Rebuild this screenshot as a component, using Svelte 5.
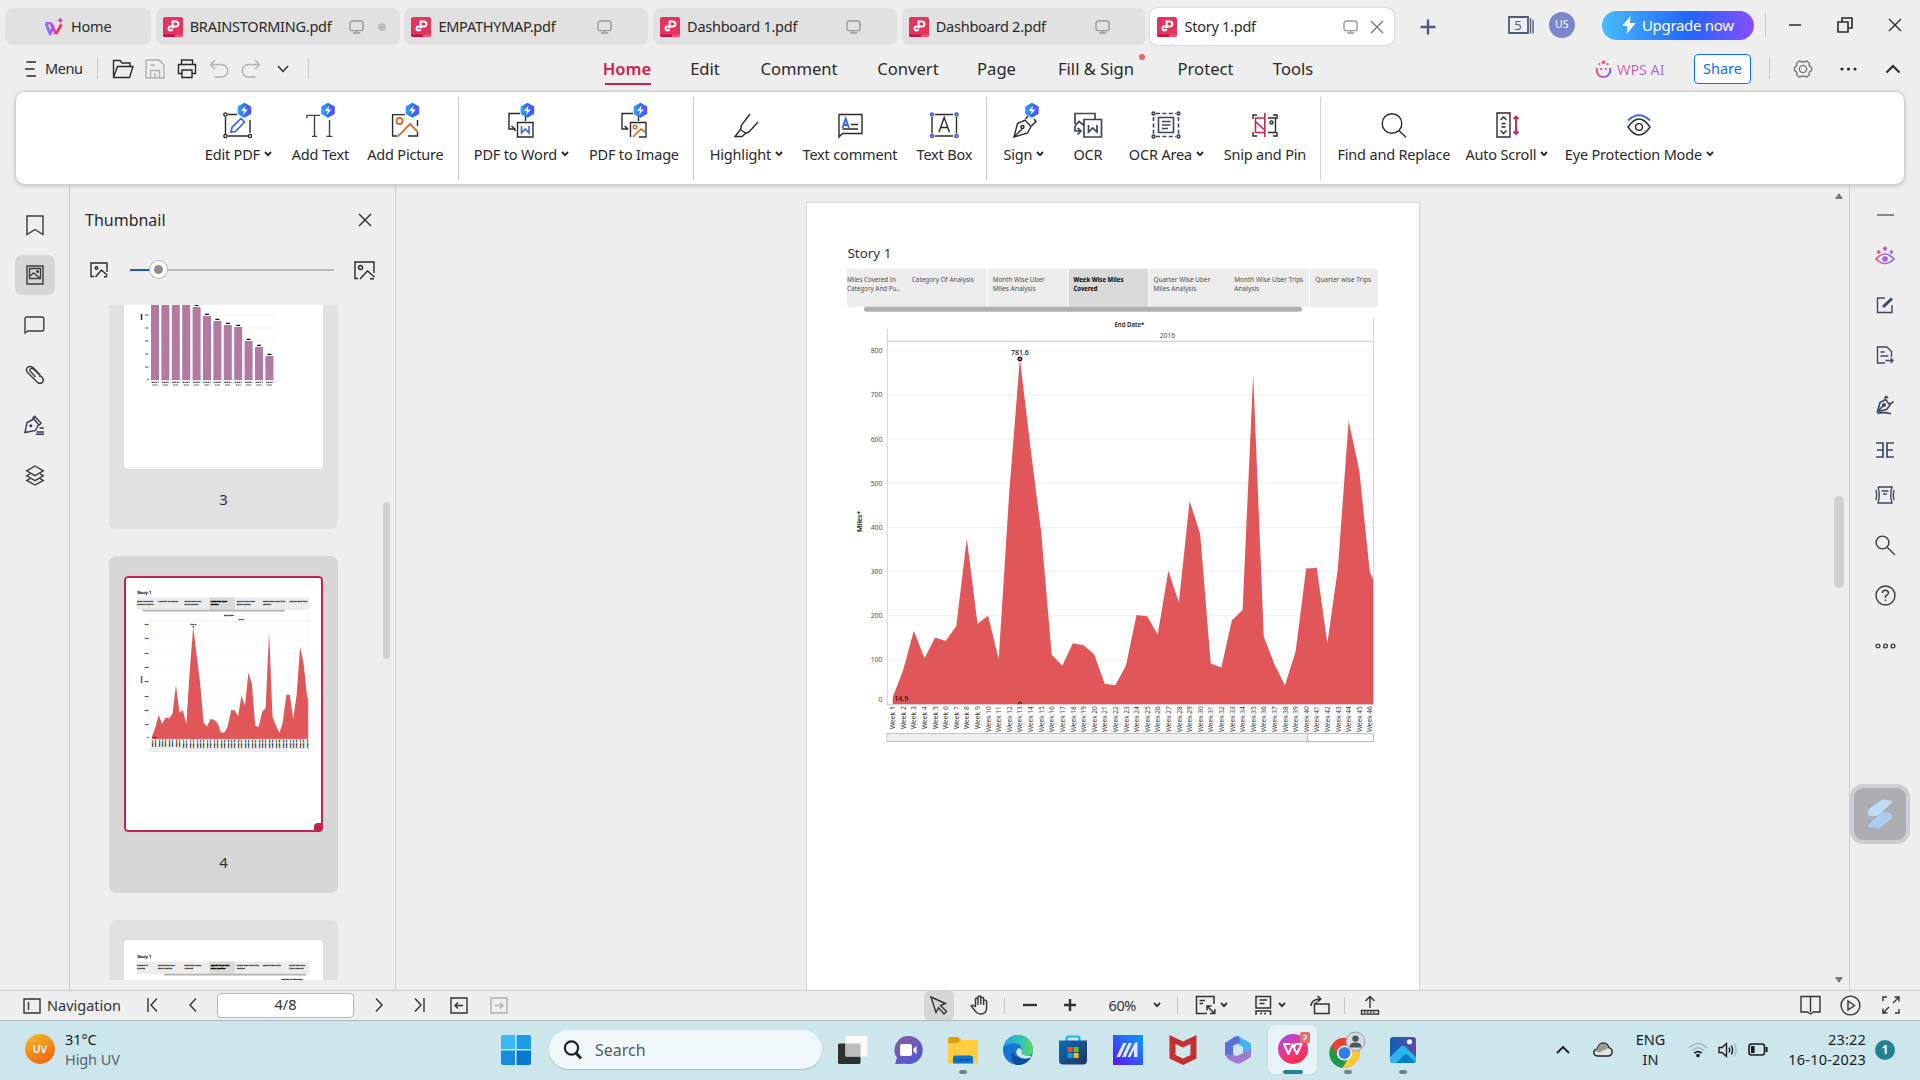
<script>
  // Icons: [width, height, svg markup]
  const bolt = '<g transform="translate(13.4 -9.8)"><path d="M8 0.5 L14.8 4.2 V11.8 L8 15.5 L1.2 11.8 V4.2Z" fill="url(#hexGrad)" stroke="none"/><path d="M9.2 3.2 L4.6 8.8 H7.6 L6.8 12.8 L11.4 7.2 H8.4Z" fill="#fff" stroke="none"/></g>';
  const icons = {
    wps: [20, 20, '<g fill="none" stroke-width="2.8" stroke-linejoin="round"><path d="M2 6.4 L6.2 17 L9.6 8.5" stroke="#8b6cf6"/><path d="M1.4 6.2H7.5" stroke="#a06bf8" stroke-width="2.4"/><path d="M7 6.4 L12 17" stroke="#d83fd0"/><path d="M12 17 L17.4 7.4" stroke="#fb2f55"/></g><path d="M16.3 0 L17.2 2.6 L19.6 3.4 L17.2 4.2 L16.3 6.8 L15.4 4.2 L13 3.4 L15.4 2.6Z" fill="#b0489c" stroke="none"/>'],
    pdf: [20, 20, '<g stroke="none"><rect width="20" height="20" rx="2" fill="#e2345f"/><path d="M0 17.4H12V20H2Q0 20 0 18Z" fill="#c70f49"/><path d="M12 17.4H20V18Q20 20 18 20H12Z" fill="#ff4f6f"/></g><path d="M9.6 11 V4.4 H12.8 A2.6 2.6 0 0 1 12.8 9.6 H7.2 A1.9 1.9 0 1 0 9.4 11.6" fill="none" stroke="#fff" stroke-width="2"/>'],
    monitor: [16, 14, '<rect x="1" y="1" width="13" height="9.6" rx="2.2"/><path d="M7.5 11V12.8M4 13H11.2"/>'],
    close: [14, 14, '<path d="M1 1L13 13M13 1L1 13"/>'],
    plus: [16, 16, '<path d="M8 0.5V15.5M0.5 8H15.5" stroke-width="2.4"/>'],
    min: [12, 12, '<path d="M0 6H12" stroke-width="1.5"/>'],
    restore: [16, 16, '<path d="M1 5H11V15H1ZM5 5V1H15V11H11" stroke-width="1.6"/>'],
    burger: [12, 16, '<path d="M1.5 1H11M0 8H9.5M1.5 15H11"/>'],
    folder: [22, 20, '<path d="M1.5 17V1.5H8L10 4H18V7.5M1.5 18.5L5.5 7.5H21L17.5 18.5Z"/>'],
    save: [20, 20, '<path d="M1 1H14L19 6V19H1ZM5.5 19V11.5H14.5V19M5.5 6H10M10 14V19"/>'],
    printer: [20, 20, '<path d="M4.5 5V1H15.5V5M4.5 14.5H1.5V5.5H18.5V14.5H15.5M5 11H15V18.5H5Z"/>'],
    undo: [20, 20, '<path d="M6 1L1.5 5.5L6 10M1.5 5.5H12.5A6.2 6.2 0 0 1 12.5 18H5.5"/>'],
    redo: [20, 20, '<path d="M14 1L18.5 5.5L14 10M18.5 5.5H7.5A6.2 6.2 0 0 0 7.5 18H14.5"/>'],
    chev: [12, 8, '<path d="M1 1L6 6.5L11 1"/>'],
    chevSm: [8, 6, '<path d="M1 1L4 4.2L7 1" stroke-width="1.9"/>'],
    chevUp: [16, 10, '<path d="M1.5 8.5L8 2L14.5 8.5" stroke-width="2"/>'],
    gear: [20, 20, '<path d="M6.4 1.8L8.2 2.8H11.8L13.6 1.8L16.4 4.2L16.2 6.6L18.6 8.8V11.2L16.2 13.4L16.4 15.8L13.6 18.2L11.8 17.2H8.2L6.4 18.2L3.6 15.8L3.8 13.4L1.4 11.2V8.8L3.8 6.6L3.6 4.2Z"/><circle cx="10" cy="10" r="3.6"/>'],
    dots: [17, 4, '<g fill="currentColor" stroke="none"><circle cx="2" cy="2" r="1.6"/><circle cx="8.5" cy="2" r="1.6"/><circle cx="15" cy="2" r="1.6"/></g>'],
    ai: [17, 18, '<g stroke="url(#aiGrad)" stroke-width="2"><path d="M2 8A6.8 7 0 1 0 15 8"/></g><path d="M6.2 8V10M10.8 8V10" stroke="#b45fe0" stroke-width="1.8"/><g fill="#e05080" stroke="none"><circle cx="8.5" cy="2.2" r="1.8"/><circle cx="4.4" cy="4.2" r="1.1"/><circle cx="12.6" cy="4.2" r="1.1"/></g>'],
    count: [26, 18, '<path d="M1 1H20V17H1Z" stroke-width="1.8"/><path d="M22.5 2V17.5M25 4V17.5" stroke-width="1.4"/>'],
    editPdf: [30, 26, '<path d="M5 2.5H14M2.5 5V22M5 24H25M27 8V21"/><g><circle cx="2.5" cy="2.5" r="1.6"/><circle cx="2.5" cy="24" r="1.6"/><circle cx="27" cy="24" r="1.6"/></g><path d="M8 20L9 15.5L18 6.5L21.5 10L12.5 19.5Z" stroke="#3c63e6" stroke-width="1.7"/>' + bolt],
    addText: [30, 26, '<path d="M2 6V3.4H15M9.5 3.4V24.4M7 24.4H12M24.5 8V24.4M21.5 24.4H27.5" stroke="#3a4258"/><g transform="translate(1.6 0)">' + bolt + '</g>'],
    addPic: [30, 26, '<path d="M15 2.6H2.6V24H7M27.5 8V14M27.5 20V24H18"/><circle cx="9.5" cy="9" r="3" stroke="#d5692f" stroke-width="1.8"/><path d="M8 24.4L20 12L28 20" stroke="#d5692f" stroke-width="1.8"/><g transform="translate(1 0)">' + bolt + '</g>'],
    toWord: [30, 26, '<path d="M14 1.5H3V17H9M5.5 14L9 17V19M19.5 4V9M11.5 10.5H27V25H11.5Z"/><path d="M15.5 14V21L19.3 17L23 21V14" stroke="#3c63e6" stroke-width="1.6"/>' + bolt],
    toImg: [30, 26, '<path d="M14 1.5H3V17H9M5.5 14L9 17M19.5 4V9M11.5 25V10.5H27V25H20"/><circle cx="16" cy="15" r="1.8" stroke="#d5692f"/><path d="M14 25L22 17L27 20.5" stroke="#d5692f" stroke-width="1.7"/>' + bolt],
    highlight: [28, 26, '<path d="M18 2L9.5 13L8.5 17.5L14 21.5L17 20L26 10M8.5 17.5L3 24.5H10L13.5 21.5"/>'],
    comment: [28, 26, '<path d="M3 25V2.5H26V21.5H6.5Z"/><path d="M6.5 16L9.7 6.5L12.9 16M7.6 13H11.8" stroke="#3c63e6" stroke-width="1.8"/><path d="M15 12.5H22M6.5 17H22"/>'],
    textBox: [30, 26, '<path d="M6 2.5H24M6 24H24M3 5V21.5M27.5 5V21.5M10 20L15.2 5.5L20.4 20M11.8 15.5H18.8"/><g stroke="#3c63e6" stroke-width="1.8"><circle cx="3" cy="2.5" r="1.4"/><circle cx="27.5" cy="2.5" r="1.4"/><circle cx="3" cy="24" r="1.4"/><circle cx="27.5" cy="24" r="1.4"/></g>'],
    sign: [28, 26, '<path d="M4 25L7.5 11.5L15 8L21 14.5L17.5 21Z"/><path d="M4 25L12 17M15.5 7L18 4M21.5 14L26 9.5L24 7"/><circle cx="12.5" cy="15" r="1.5"/><g transform="translate(.5 0)">' + bolt + '</g>'],
    ocr: [30, 26, '<g stroke="#3c465c" stroke-width="1.7"><path d="M2 12V1.5H22V7M11 7.5H28.5V25H11ZM2 14L6 9.5L10.5 13M2 14V19H7M4.5 16L8 19L4.5 22.5"/><path d="M15.5 13V20L19.8 16L24 20V13"/></g>'],
    ocrArea: [30, 28, '<g stroke="#3c465c" stroke-width="1.6"><path d="M5 2.5H25M5 25.5H25M2.5 6V23M27.5 6V23" stroke-dasharray="4 2.4"/><path d="M7.5 6.5H22.5V21.5H7.5ZM11 10.5H19.5M11 14H19.5M11 17.5H17"/><circle cx="2.5" cy="2.5" r="1.4"/><circle cx="27.5" cy="2.5" r="1.4"/><circle cx="2.5" cy="25.5" r="1.4"/><circle cx="27.5" cy="25.5" r="1.4"/></g>'],
    snip: [28, 26, '<path d="M2 7V3H6M2 20V24H6M22 3H26V7M22 24H26V20M17 6H24.5V20.5H17"/><circle cx="20.5" cy="10.5" r="1.5"/><path d="M13.8 1V25M13 6H4.5V20.5H13M5 10L13 17.5" stroke="#c9254e" stroke-width="1.6"/>'],
    find: [28, 26, '<circle cx="12" cy="11.5" r="9.8"/><path d="M19 18.5L26 25.2"/>'],
    scroll: [28, 26, '<path d="M4 1H17V25H4ZM7.5 8L10.5 5L13.5 8M7.5 18.5L10.5 21.5L13.5 18.5M8.5 11.5H12.5M8.5 15H12.5"/><path d="M23 5V21.5M20.5 7L23 4.5L25.5 7M20.5 19.5L23 22L25.5 19.5" stroke="#c9254e" stroke-width="1.9"/>'],
    eye: [28, 26, '<path d="M3 15Q14-1 25 15Q14 31 3 15Z"/><circle cx="14" cy="15" r="3.4"/><path d="M3 8.5Q14-2 25 8.5" stroke="#3c63e6" stroke-width="1.8"/>'],
    bookmark: [18, 21, '<path d="M1 1H17V19.5L9 14.5L1 19.5Z"/>'],
    thumbs: [18, 20, '<path d="M1 1H17V19H1ZM3.5 3.5H14.5V13.5H3.5ZM4 11L7.5 8L14.5 13.5"/><circle cx="11.5" cy="6.5" r=".8"/>'],
    bubble: [21, 18, '<path d="M1 17V2.5Q1 1 2.5 1H18Q19.8 1 19.8 2.5V13.2Q19.8 15 18 15H4Z"/>'],
    clip: [20, 20, '<path d="M10.5 11.5L5.5 6.2Q4 4.5 5.5 3.4T9 4L17.4 12.4Q19.4 15 17.4 17Q15 19 12.6 17L2.8 7.4Q0 4 2.6 1.8Q5 .2 7.8 2L14.6 9Q15.6 10.4 14.6 11.6" transform="translate(0 .4)"/>'],
    penLines: [21, 20, '<g stroke="#333a4d"><path d="M1 17.5L3 7.5L10 4L14.5 9.5L11.5 15.5ZM8.5 3.5L10.5 1.2L17 8L15 10.5M12.5 17H20M15.5 13H20M12 19.3H20"/><circle cx="6.8" cy="10.8" r=".8"/></g>'],
    layers: [18, 21, '<path d="M9 1L17.3 5.8L9 10.6L.7 5.8ZM4 8.8L.7 10.8L9 15.6L17.3 10.8L14 8.8M4 13.6L.7 15.4L9 20L17.3 15.4L14 13.6"/>'],
    picSm: [18, 16, '<path d="M4 14.5H1V1H17V10M5.5 15L11.5 8L17.5 13.5M14 14.8H17"/><circle cx="6.5" cy="6" r="1.3"/>'],
    picLg: [21, 19, '<path d="M4 17.5H1V1H20V12M6 18L13.5 10L20.5 16M16 17.7H20"/><circle cx="6.5" cy="6.5" r="2"/>'],
    line: [17, 2, '<path d="M0 1H17" stroke="#888" stroke-width="2"/>'],
    aiEye: [20, 20, '<g stroke="url(#aiGrad)" stroke-width="1.6"><path d="M1 13Q10 3 19 13Q10 22 1 13Z"/></g><circle cx="10" cy="13" r="2.8" fill="#a45fe6" stroke="none"/><path d="M10 .5V5M7.8 2.6H12.2" stroke="#c05ac8" stroke-width="2"/><path d="M3.6 4V8M1.8 6H5.5" stroke="#e0507c" stroke-width="1.6"/><path d="M16.4 4V8M14.6 6H18.2" stroke="#8a6af5" stroke-width="1.6"/>'],
    rEdit: [18, 18, '<path d="M9 2H1.5V16.5H16V9"/><path d="M7 11L16 2.5" stroke-width="3"/>'],
    rExport: [18, 18, '<path d="M9 17H1.5V1H11L15.5 5.5V11M4.5 6H8.5M4.5 10H12.5M9.5 14.5H17M14.5 12L17 14.5L14.5 17"/>'],
    rPen: [18, 20, '<path d="M1.5 16.5L4 7.5L9.5 4.5L14 10L10.5 14.5ZM8.5 3.5L10 1.5L12 3M14 9L17.5 6.5M1.5 18.5Q7 16.5 15 18.8M2 16L8 10" stroke-width="1.7"/><circle cx="8" cy="10" r="1.3" fill="currentColor"/>'],
    rCompare: [18, 16, '<path d="M0 1H7V15H0M1 8H7M18 1H11V15H18M11 8H17" stroke-width="1.7"/>'],
    rCrop: [20, 18, '<path d="M3 1H17Q14.5 9 17 17H3Q5.5 9 3 1M6.5 5H13.5M8 8H12M1 4Q2.5 9 1 14M19 4Q17.5 9 19 14"/>'],
    rSearch: [21, 21, '<circle cx="7.5" cy="7.5" r="6.4"/><path d="M12.2 12.2L20 20"/>'],
    rHelp: [21, 21, '<circle cx="10.5" cy="10.5" r="9.5"/><path d="M7.4 8Q7.4 5.2 10.4 5.2T13.4 8Q13.4 9.6 10.5 11V13M10.5 14.6V16"/>'],
    rDots: [21, 6, '<circle cx="3" cy="3" r="1.9"/><circle cx="10.5" cy="3" r="1.9"/><circle cx="18" cy="3" r="1.9"/>'],
    navPane: [18, 16, '<path d="M1 1H17V15H1ZM5.5 4V12"/>'],
    first: [11, 14, '<path d="M1 0V14M10 .5L4 7L10 13.5"/>'],
    prev: [8, 14, '<path d="M7 .5L1 7L7 13.5"/>'],
    next: [8, 14, '<path d="M1 .5L7 7L1 13.5"/>'],
    last: [11, 14, '<path d="M10 0V14M1 .5L7 7L1 13.5"/>'],
    boxL: [18, 17, '<path d="M1 1H17V16H1ZM13 8.5H5M8 5.5L5 8.5L8 11.5"/>'],
    boxR: [18, 17, '<path d="M1 1H17V16H1ZM5 8.5H13M10 5.5L13 8.5L10 11.5"/>'],
    cursor: [18, 19, '<path d="M1 1L15.5 7.5L10.5 9.5L16.5 15.5L14 18L8.5 11.8L6 16.5Z"/>'],
    hand: [18, 20, '<path d="M5.5 12V4Q6.5 2 8 4V10M8 4V2Q9.5 0 10.8 2V9.5M10.8 3Q12.5 1.4 13.6 3.4V10M13.6 5.5Q15.5 4.4 16.6 6.4V13Q16.5 19 10.5 19Q7 19 4.8 15.5L1.2 11Q2 8.8 5.5 12"/>'],
    minus: [16, 16, '<path d="M1 8H15" stroke-width="2.4"/>'],
    plusSm: [14, 14, '<path d="M7 1V13M1 7H13" stroke-width="2.4"/>'],
    fit: [21, 20, '<path d="M12 18.5H1.5V1.5H19V9M4.5 5.5H10M4.5 8.5H8M12 11L19.5 18.5M12 15.5V11H16.5M19.8 14V18.5H15" stroke-width="1.5"/>'],
    pageV: [18, 20, '<path d="M2 1.5H16.5V13H2ZM5.5 5H13M5.5 8.5H10.5M2 20V16H16.5V20M6 18.5H8M10 18.5H12" stroke-width="1.5"/>'],
    rotate: [20, 20, '<path d="M4.5 10V9H19V18.5H4.5V9L7 7.5M1 11Q1.5 4 10.5 4M7.5 1L10.8 4L7.5 7" stroke-width="1.5"/>'],
    upload: [20, 20, '<path d="M10 13V1.5M5.5 6L10 1.5L14.5 6" /><rect x="1.5" y="15.5" width="17" height="3.6"/><path d="M4 17.3H16" stroke-dasharray="1.5 1.5"/>'],
    book: [21, 20, '<path d="M10.5 1.5H1V17H7.5L10.5 19L13.5 17H20V1.5H10.5V17"/>'],
    play: [21, 21, '<circle cx="10.5" cy="10.5" r="9.4"/><path d="M8 6V15L14.5 10.5Z"/>'],
    full: [18, 18, '<path d="M1 5V1H5M17 13V17H13M11 7L16.5 1.5M12.5 1H17V5.5M7 11L1.5 16.5M1 12.5V17H5.5"/>'],
    winLogo: [30, 30, '<g stroke="none"><path d="M0 2Q0 0 2 0H14V14H0Z" fill="#38b8f5"/><path d="M15.6 0H28Q30 0 30 2V14H15.6Z" fill="#1e9be8"/><path d="M0 15.6H14V30H2Q0 30 0 28Z" fill="#148de0"/><path d="M15.6 15.6H30V28Q30 30 28 30H15.6Z" fill="#0779d2"/></g>'],
    mag: [19, 20, '<circle cx="8.5" cy="8" r="6.6" stroke-width="2.2"/><path d="M13 13L18 18.5" stroke-width="2.8"/>'],
    taskView: [30, 30, '<g stroke="none"><rect x="0" y="8.5" width="22.5" height="20.5" rx="1.5" fill="#30302f"/><rect x="7.5" y="1" width="22" height="20.5" rx="1.5" fill="#fafafa"/><rect x="7.5" y="8.5" width="15" height="13" fill="#bdbdbd"/></g>'],
    chat: [30, 30, '<path d="M15 1A14 14 0 1 1 13 28.7L2 29L4 23A14 14 0 0 1 15 1Z" fill="url(#chatGrad)" stroke="none"/><rect x="7" y="9" width="12" height="12" rx="2" fill="#fff" stroke="none"/><path d="M20.5 13.5L23.5 11V19L20.5 16.5Z" fill="#fff" stroke="none"/>'],
    files: [30, 30, '<g stroke="none"><path d="M0 4Q0 2 2 2H10L13 5V10H0Z" fill="#e09f06"/><path d="M0 8H10L13 5H28.5Q30 5 30 6.5V28.5H1.5Q0 28.5 0 27Z" fill="#ffcd42"/><path d="M5 28.5V23Q5 20.6 7.5 20.6H22.5Q25 20.6 25 23V28.5Z" fill="#0c75c9"/><rect x="8.5" y="24" width="13" height="1.4" fill="#054a8c"/></g>'],
    edge: [30, 30, '<g stroke="none"><circle cx="15" cy="15" r="15" fill="#1575d0"/><path d="M.3 12A15 15 0 0 1 30 15Q30 20 25 20.5Q18.5 21 19 17Q19.5 9 11 8.3Q4.5 8 .3 12Z" fill="url(#edgeGrad)"/><path d="M28 22.5A15 15 0 0 1 13 29.9Q6 24 9.5 16.5Q11.5 22.5 18 23.5Q24 24.5 28 22.5Z" fill="#0b4d99"/><path d="M15.5 13Q20 14 18.6 18Q21 21.5 27.5 20.5L28 22.5Q20 25.5 14.5 20.5Q11.5 16 15.5 13Z" fill="#cfe8ee"/></g>'],
    store: [30, 30, '<path d="M8.5 8V3.5Q8.5 1.5 10.5 1.5H19.5Q21.5 1.5 21.5 3.5V8" stroke="#19b4ef" stroke-width="2.2"/><path d="M1 5.5H29V25Q29 29.5 25 29.5H5Q1 29.5 1 25Z" fill="url(#storeGrad)" stroke="none"/><g stroke="none"><rect x="9.5" y="12" width="5" height="5" fill="#f25022"/><rect x="15.6" y="12" width="5" height="5" fill="#7fba00"/><rect x="9.5" y="18" width="5" height="5" fill="#00a4ef"/><rect x="15.6" y="18" width="5" height="5" fill="#ffb900"/></g>'],
    asus: [30, 30, '<rect width="30" height="30" fill="url(#asusGrad)" stroke="none"/><path d="M3.5 22L10 8H13.5L7 22ZM9 22L15.5 8H19L12.5 22ZM14.5 22L22 7.5H24.5V22H21V14.5L17.5 22Z" fill="#dfe6ff" stroke="none"/>'],
    mcafee: [28, 30, '<path d="M.5 0L14 6.5L27.5 0V23.5L14 30L.5 23.5Z" fill="#c4302f" stroke="none"/><path d="M6.5 9L14 12.5L21.5 9V20L14 23.5L6.5 20Z" fill="#cfe6ec" stroke="none"/>'],
    m365: [28, 30, '<g stroke="none"><path d="M14 1L27 8.5V16L19 20V12L10 7Z" fill="#42b4ee"/><path d="M15 1L11 1.5L1 8V20L5 24L9 20V11L16 7Z" fill="#5a6fd8"/><path d="M1 19.5L9 20L13 21L27 14V22L16 28.6H12L4 24Z" fill="#a07ccf"/><path d="M14 9.8L18.6 12.4V17.6L14 20.2L9.4 17.6V12.4Z" fill="#cfe6ec"/></g>'],
    wpsApp: [34, 32, '<circle cx="15" cy="17" r="15" fill="url(#wpsGrad)" stroke="none"/><path d="M12.5 12H6L10.4 22L14.6 12.6L18.8 22L23.6 12H17.4L16.4 14.6" stroke="#fff" stroke-width="2.1" stroke-linejoin="round"/><rect x="22" y="0" width="10" height="11" rx="1.5" fill="#ee6b6b" stroke="none"/><path d="M25 3.6H27.6A1.7 1.7 0 0 1 27.6 6.6H26V8.5" stroke="#fff" stroke-width="1.2"/>'],
    chrome: [38, 38, '<g stroke="none"><circle cx="15.5" cy="22" r="15" fill="#ea4335"/><path d="M2.5 14.5A15 15 0 0 0 13.5 37L20.5 25L9.5 25.5Z" fill="#1e9a4c"/><path d="M30.5 22A15 15 0 0 1 13.5 37L21.5 24L19 16H29Z" fill="#fcc934"/><path d="M2.5 14.5L9.5 26L15.5 15H29A15 15 0 0 0 2.5 14.5Z" fill="#ea4335"/><circle cx="15.5" cy="22" r="7.6" fill="#fff"/><circle cx="15.5" cy="22" r="6" fill="#2f7de9"/></g><circle cx="26.5" cy="10.5" r="9.4" fill="#d4d9e0" stroke="#8c9196" stroke-width=".8"/><circle cx="26.5" cy="7.6" r="3.2" fill="#4b5563" stroke="none"/><path d="M20.5 16.5Q20.5 11.6 26.5 11.6T32.5 16.5Z" fill="#4b5563" stroke="none"/>'],
    photos: [26, 26, '<rect width="26" height="26" rx="3" fill="url(#photoGrad)" stroke="none"/><path d="M0 20L11 9.5Q13 8 15 9.5L26 20V23Q26 26 23 26H3Q0 26 0 23Z" fill="#2bb5ee" stroke="none"/><path d="M6 26L14 18Q16 16.6 18 18L25 25Q24 26 23 26Z" fill="#0b7ecb" stroke="none"/><circle cx="19.5" cy="4.8" r="2.6" fill="#e8f3ff" stroke="none"/>'],
    trayUp: [14, 9, '<path d="M1 8L7 2L13 8" stroke-width="1.8"/>'],
    cloud: [20, 15, '<path d="M4.5 14Q.8 13.6 .8 10.4Q1 7.4 4.4 7Q5.6 1 10.6 1Q14.6 1.2 15.8 5.6Q19.2 6.6 19.2 10Q19 13.6 15.5 14Z" fill="#e2e4e6" stroke="#222"/><path d="M1.8 9Q2.2 7 4.4 7Q5.6 1.6 10.6 1.6Q14.2 1.8 15.2 6L6.5 10.5Z" fill="#999" stroke="none"/>'],
    wifi: [20, 16, '<path d="M1 6Q10-3 19 6M3.8 8.8Q10 2.8 16.2 8.8" stroke="#a3b8bd" stroke-width="1.4"/><path d="M6.4 11.2Q10 8 13.6 11.2" stroke-width="1.8"/><circle cx="10" cy="13.6" r="1.8" fill="currentColor" stroke="none"/>'],
    speaker: [20, 16, '<path d="M1 5.5H4L8.5 1.5V14.5L4 10.5H1Z"/><path d="M11 5.5Q12.6 8 11 10.5M13.2 3.5Q16 8 13.2 12.5"/><path d="M16 1.5Q20.4 8 16 14.5" stroke="#a3b8bd"/>'],
    battery: [20, 13, '<rect x="1" y="1" width="15.5" height="11" rx="2.5" stroke-width="1.6"/><rect x="3" y="3" width="3.6" height="7" fill="currentColor" stroke="none"/><path d="M18.6 4V9" stroke-width="2"/>'],
    stylus: [26, 34, '<g stroke="none"><path d="M1 16Q1 12 6 9L15 2.5L26 4L15 15.5Q10 20 4 19Q1 18.6 1 16Z" fill="#bfdcf6"/><path d="M25 18Q26 21.5 21 24.5L12 31.5L0 29.5L11 18.5Q16 14.5 21 15.4Q25 16 25 18Z" fill="#a9ccf0"/></g>']
  };

  const tabs = [
    { name: 'BRAINSTORMING.pdf', dot: true },
    { name: 'EMPATHYMAP.pdf' },
    { name: 'Dashboard 1.pdf' },
    { name: 'Dashboard 2.pdf' },
    { name: 'Story 1.pdf', active: true }
  ];
  const quick = [['folder', ''], ['save', 'dim'], ['printer', ''], ['undo', 'dim'], ['redo', 'dim'], ['chev', '']];
  const menus = ['Home', 'Edit', 'Comment', 'Convert', 'Page', 'Fill & Sign', 'Protect', 'Tools'];
  const ribbon = [
    ['editPdf', 'Edit PDF', 1], ['addText', 'Add Text'], ['addPic', 'Add Picture'], null,
    ['toWord', 'PDF to Word', 1], ['toImg', 'PDF to Image'], null,
    ['highlight', 'Highlight', 1], ['comment', 'Text comment'], ['textBox', 'Text Box'], null,
    ['sign', 'Sign', 1], ['ocr', 'OCR'], ['ocrArea', 'OCR Area', 1], ['snip', 'Snip and Pin'], null,
    ['find', 'Find and Replace'], ['scroll', 'Auto Scroll', 1], ['eye', 'Eye Protection Mode', 1]
  ];
  const rail = ['bookmark', 'thumbs', 'bubble', 'clip', 'penLines', 'layers'];
  const tools = ['line', 'aiEye', 'rEdit', 'rExport', 'rPen', 'rCompare', 'rCrop', 'rSearch', 'rHelp', 'rDots'];
  const apps = [
    ['taskView'], ['chat'], ['files', 1], ['edge'], ['store'], ['asus'], ['mcafee'], ['m365'], ['wpsApp', 2], ['chrome', 1], ['photos', 1]
  ];

  // Weekly mileage; the plot is clipped just after week 46
  const miles = [14.9, 78, 166, 104, 151, 143, 177, 375, 182, 200, 102, 480, 781.6, 580, 390, 112, 87, 138, 133, 113, 46, 43, 87, 202, 199, 157, 302, 230, 460, 385, 92, 83, 190, 213, 747, 153, 91, 42, 119, 307, 308, 138, 308, 641, 530, 300];
  const px = (i) => 85.8 + i * 10.62;
  const py = (v) => 502 - v * 0.4425;
  const area = `M${px(0)} 502 ` + miles.map((v, i) => `L${px(i).toFixed(1)} ${py(v).toFixed(1)}`).join(' ') + ' L567.4 378 L567.4 502Z';
  const ticks = [100, 200, 300, 400, 500, 600, 700, 800];

  // Story captions: [x, [[text, width], ...]]
  const captions4 = [
    [40, [['Miles Covered In', 49], ['Category And Pu..', 53]]],
    [105, [['Category Of Analysis', 62]]],
    [186, [['Month Wise Uber', 52], ['Miles Analysis', 43]]],
    [267, [['Week Wise Miles', 50], ['Covered', 24]]],
    [347, [['Quarter Wise Uber', 57], ['Miles Analysis', 43]]],
    [428, [['Month Wise Uber Trips', 69], ['Analysis', 25]]],
    [509, [['Quarter wise Trips', 56]]]
  ];
  const captions5 = [
    [40, [['Category Of', 34], ['Analysis', 25]]],
    [105, [['Month Wise Uber', 52], ['Miles Analysis', 43]]],
    [186, [['Week Wise Miles', 52], ['Covered', 26]]],
    [267, [['Quarter Wise Uber', 58], ['Miles Analysis', 45]]],
    [347, [['Month Wise Uber Trips', 69], ['Analysis', 25]]],
    [428, [['Quarter wise Trips', 56]]],
    [509, [['Month Wise Uber', 50], ['Trips Analysis', 44]]]
  ];
  const bars = [90, 90, 90, 90, 73, 64, 59, 55, 53, 39, 33, 24];
</script>

{#snippet ic(name)}
  <svg class="ic" width={icons[name][0]} height={icons[name][1]} viewBox="0 0 {icons[name][0]} {icons[name][1]}">{@html icons[name][2]}</svg>
{/snippet}

{#snippet storyHead(captions, barX)}
  <text x="40.5" y="55" class="s-title" textLength="44" lengthAdjust="spacingAndGlyphs">Story 1</text>
  <rect x="40" y="66" width="532" height="38" fill="#ececec" />
  <rect x="262" y="66" width="80" height="38" fill="#d9d9d9" />
  <path d="M180.5 66V104M261.5 66V104M342.5 66V104M503.5 66V104" stroke="#fff" />
  {#each captions as [x, lines], i}
    {#each lines as [t, w], j}
      <text {x} y={79 + j * 9} class="s-cap" class:on={i === 3} textLength={w} lengthAdjust="spacingAndGlyphs">{t}</text>
    {/each}
  {/each}
  <rect x={barX} y="104" width="439" height="5" rx="2.5" fill="#b0b0b0" />
{/snippet}

{#snippet storyPage()}
  <svg class="story" viewBox="0 0 613 788">
    {@render storyHead(captions4, 57)}
    <text x="323" y="124" class="s-bold" text-anchor="middle" textLength="30" lengthAdjust="spacingAndGlyphs">End Date*</text>
    <text x="361" y="135" class="s-num" text-anchor="middle">2016</text>
    {#each ticks as t}
      <path d="M80 {py(t)}H567" stroke="#f0f0f0" />
      <text x="75.5" y={py(t) + 2.5} class="s-num" text-anchor="end">{t}</text>
    {/each}
    <text x="75.5" y="499.5" class="s-num" text-anchor="end">0</text>
    <text transform="translate(55.5 319) rotate(-90)" class="s-bold" text-anchor="middle">Miles*</text>
    <path d={area} fill="#e15759" />
    <path d="M80.5 126V502M567.5 115V502" stroke="#d4d4d4" fill="none" />
    <path d="M80 138.5H567.5M80 502.5H567.5" stroke="#c9c9c9" fill="none" />
    <circle cx={px(12)} cy={py(781.6)} r="1.9" fill="#e15759" stroke="#111" stroke-width="1.2" />
    <path d="M{px(12) - 1.8} 502A1.8 1.8 0 0 1 {px(12) + 1.8} 502" fill="none" stroke="#111" />
    <text x={px(12)} y="152" class="s-mark" text-anchor="middle">781.6</text>
    <text x="87.5" y="498.5" class="s-mark">14.9</text>
    {#each miles as _, i}
      <text transform="translate({px(i) + 2.6} 504) rotate(-90)" class="s-week" text-anchor="end" textLength={i < 9 ? 23 : 26} lengthAdjust="spacingAndGlyphs">Week {i + 1}</text>
    {/each}
    <rect x="80" y="531.5" width="487.5" height="8" fill="#fff" stroke="#b4b4b4" />
    <rect x="80.5" y="532" width="421" height="7" fill="#efefef" />
    <path d="M501.5 531V540" stroke="#b4b4b4" />
  </svg>
{/snippet}

<svg class="defs" width="0" height="0">
  <defs>
    <linearGradient id="hexGrad"><stop offset="0" stop-color="#2fa8fb" /><stop offset=".55" stop-color="#2c6cf8" /><stop offset="1" stop-color="#6a4cf5" /></linearGradient>
    <linearGradient id="aiGrad"><stop offset="0" stop-color="#ec5568" /><stop offset=".5" stop-color="#b45fe0" /><stop offset="1" stop-color="#7468fa" /></linearGradient>
    <linearGradient id="chatGrad" x2="0.6" y2="1"><stop offset="0" stop-color="#8b5a9c" /><stop offset="1" stop-color="#5458d4" /></linearGradient>
    <linearGradient id="edgeGrad"><stop offset="0" stop-color="#1fa6e0" /><stop offset=".6" stop-color="#34c4b4" /><stop offset="1" stop-color="#62d957" /></linearGradient>
    <linearGradient id="storeGrad" x2="1" y2="1"><stop offset="0" stop-color="#0c6cbc" /><stop offset="1" stop-color="#22335c" /></linearGradient>
    <linearGradient id="asusGrad" x1="0" y1="1" x2="1" y2="0"><stop offset="0" stop-color="#5a14f5" /><stop offset="1" stop-color="#0a9dfb" /></linearGradient>
    <linearGradient id="wpsGrad" x1="0" y1="0" x2=".6" y2="1"><stop offset="0" stop-color="#8e4dfb" /><stop offset=".5" stop-color="#e9389c" /><stop offset="1" stop-color="#fb2c48" /></linearGradient>
    <linearGradient id="photoGrad" x2="1"><stop offset="0" stop-color="#0b63b4" /><stop offset="1" stop-color="#65479d" /></linearGradient>
  </defs>
</svg>

<div class="app">
  <header class="titlebar">
    <div class="tab home">{@render ic('wps')}<span class="up1">Home</span></div>
    {#each tabs as t}
      <div class="tab" class:active={t.active}>
        {@render ic('pdf')}<span class="tname">{t.name}</span>
        <span class="mon">{@render ic('monitor')}</span>
        <span class="end">
          {#if t.active}{@render ic('close')}{:else if t.dot}<i class="unsaved"></i>{/if}
        </span>
      </div>
    {/each}
    <div class="plus">{@render ic('plus')}</div>
    <div class="win">
      <span class="count">{@render ic('count')}<b>5</b></span>
      <span class="avatar">US</span>
      <span class="upgrade"><svg width="14" height="18" viewBox="0 0 14 18"><path d="M8.5 0L0 10H5.5L4.5 18L14 7H8Z" fill="#fff" /></svg>Upgrade now</span>
      <i class="sep"></i>
      <span>{@render ic('min')}</span><span>{@render ic('restore')}</span><span>{@render ic('close')}</span>
    </div>
  </header>

  <nav class="menubar">
    <div class="menu">{@render ic('burger')}<span>Menu</span></div>
    <i class="sep"></i>
    {#each quick as [n, cls]}<span class="cell {cls}">{@render ic(n)}</span>{/each}
    <i class="sep"></i>
    <span></span>
    {#each menus as m, i}
      <span class="cell mtab" class:sel={i === 0} class:alert={i === 5}><b>{m}</b></span>
    {/each}
    <span></span>
    <div class="wpsai">{@render ic('ai')}<span>WPS AI</span></div>
    <div class="share">Share</div>
    <i class="sep"></i>
    <span class="cell gear">{@render ic('gear')}</span>
    <span class="cell">{@render ic('dots')}</span>
    <span class="cell">{@render ic('chevUp')}</span>
  </nav>

  <section class="ribbon">
    {#each ribbon as r}
      {#if r}
        <div class="tool">
          <div class="ticon">{@render ic(r[0])}</div>
          <div class="tlabel">{r[1]}{#if r[2]}{@render ic('chevSm')}{/if}</div>
        </div>
      {:else}<i class="rsep"></i>{/if}
    {/each}
  </section>

  <main class="body">
    <aside class="rail">
      {#each rail as n, i}<span class:on={i === 1}>{@render ic(n)}</span>{/each}
    </aside>

    <aside class="panel">
      <div class="phead"><span>Thumbnail</span>{@render ic('close')}</div>
      <div class="zoomrow">
        {@render ic('picSm')}
        <div class="slider"><i></i><b></b></div>
        {@render ic('picLg')}
      </div>
      <div class="list">
        <div class="thumbs">
          <div class="card c3">
            <div class="sheet">
              <svg viewBox="0 0 199 164">
                {#each [10, 23, 36, 49, 62] as y}<path d="M27 {y}H151" stroke="#f2f2f2" />{/each}
                <path d="M27 75H151" stroke="#dcd0d8" />
                {#each bars as h, i}
                  <rect x={27 + i * 10.4} y={75 - h} width="8" height={h} fill="#b07aa1" />
                  <path d="M{27.5 + i * 10.4} 77.4H{34.5 + i * 10.4}M{28.5 + i * 10.4} 80H{33.5 + i * 10.4}" stroke="#444" stroke-dasharray="1.6 .5" stroke-width="1.2" />
                  {#if i > 3}<path d="M{29 + i * 10.4} {73.4 - h}H{33 + i * 10.4}" stroke="#111" stroke-width="1.4" />{/if}
                {/each}
                {#each [10, 23, 36, 49, 62] as y}<path d="M21 {y}H24.5" stroke="#555" stroke-width="1.2" />{/each}
                <path d="M23 74.5H24.5" stroke="#555" />
                <path d="M17.5 9V15" stroke="#222" stroke-width="1.4" />
              </svg>
            </div>
            <div class="num">3</div>
          </div>
          <div class="card c4">
            <div class="sheet cur">{@render storyPage()}<i class="corner"></i></div>
            <div class="num">4</div>
          </div>
          <div class="card c5">
            <div class="sheet">
              <svg class="story" viewBox="0 0 613 788">
                {@render storyHead(captions5, 123)}
                <text x="517" y="124" class="s-bold" text-anchor="middle">Quarter of End Date</text>
              </svg>
            </div>
          </div>
        </div>
      </div>
      <i class="pscroll"></i>
    </aside>

    <section class="canvas">
      <div class="page">{@render storyPage()}</div>
      <div class="vscroll"><i class="up"></i><i class="bar"></i><i class="down"></i></div>
    </section>

    <aside class="tools">
      {#each tools as n}<span>{@render ic(n)}</span>{/each}
    </aside>
    <div class="float">{@render ic('stylus')}</div>
  </main>

  <section class="status">
    <div class="nav">{@render ic('navPane')}<span class="up1">Navigation</span></div>
    <span>{@render ic('first')}</span>
    <span>{@render ic('prev')}</span>
    <div class="pageno">4/8</div>
    <span>{@render ic('next')}</span>
    <span>{@render ic('last')}</span>
    <span>{@render ic('boxL')}</span>
    <span class="dim">{@render ic('boxR')}</span>
    <span></span>
    <span class="picked">{@render ic('cursor')}</span>
    <span>{@render ic('hand')}</span>
    <i class="sep"></i>
    <span>{@render ic('minus')}</span>
    <span>{@render ic('plusSm')}</span>
    <span class="pct">60%</span>
    <span>{@render ic('chevSm')}</span>
    <i class="sep"></i>
    <span>{@render ic('fit')}</span>
    <span>{@render ic('chevSm')}</span>
    <span class="r">{@render ic('pageV')}</span>
    <span>{@render ic('chevSm')}</span>
    <span class="r">{@render ic('rotate')}</span>
    <i class="sep"></i>
    <span>{@render ic('upload')}</span>
    <span></span>
    <span>{@render ic('book')}</span>
    <span>{@render ic('play')}</span>
    <span>{@render ic('full')}</span>
  </section>

  <footer class="taskbar">
    <div class="weather">
      <span class="uv">UV</span>
      <div class="wtext"><span>31°C</span><span class="soft">High UV</span></div>
    </div>
    {@render ic('winLogo')}
    <div class="search">{@render ic('mag')}<span>Search</span></div>
    <div class="apps">
      {#each apps as [n, run]}
        <span class="appbtn" class:running={run === 1} class:focus={run === 2}>{@render ic(n)}</span>
      {/each}
    </div>
    <div class="tray">
      <span>{@render ic('trayUp')}</span>
      <span class="cl">{@render ic('cloud')}</span>
      <span class="two mid">ENG<br />IN</span>
      <span>{@render ic('wifi')}</span>
      <span>{@render ic('speaker')}</span>
      <span>{@render ic('battery')}</span>
      <span class="two clock">23:22<br />16-10-2023</span>
      <b class="badge">1</b>
    </div>
  </footer>
</div>

<style>
  :global(body) { background: #eee; overflow: hidden; }
  .app {
    width: 1920px; height: 1080px; display: flex; flex-direction: column; overflow: hidden;
    background: #eeeeee; color: #2a2a2a;
    font-family: 'Noto Sans', 'Open Sans', sans-serif; font-size: 14.5px;
  }
  .app, .app * { box-sizing: border-box; }
  .defs { position: absolute; }
  .ic { display: block; flex: none; overflow: visible; fill: none; stroke: currentColor; stroke-width: 1.4; }
  .up1 { padding-bottom: 2px; }

  .titlebar { height: 46px; padding: 8px 0 0 5px; display: flex; gap: 4.7px; flex: none; }
  .tab { width: 244px; height: 37px; border-radius: 8px; background: #e1e1e1; display: flex; align-items: center; padding-left: 7px; flex: none; }
  .tab.home { width: 146px; padding-left: 39px; gap: 7px; letter-spacing: -.2px; }
  .tab.active { background: #fff; box-shadow: 0 0 2px rgba(0, 0, 0, .3); }
  .tname { width: 166px; flex: none; padding: 0 0 2px 7px; white-space: nowrap; letter-spacing: -.25px; }
  .mon { width: 16px; flex: none; color: #9a9a9a; }
  .end { width: 35px; flex: none; display: flex; justify-content: center; color: #777; }
  .unsaved { width: 8px; height: 8px; border-radius: 50%; background: #bdbdbd; }
  .plus { width: 59px; height: 37px; flex: none; display: flex; align-items: center; justify-content: flex-end; padding-right: 22px; color: #4a5b7d; }
  .win { display: grid; grid-template-columns: 26px 56px 164px 24px 34px 66px 35px; height: 34px; align-items: center; justify-items: center; margin-left: 45px; }
  .count { position: relative; color: #4e5d7c; display: flex; }
  .count b { position: absolute; left: 6.5px; top: -1px; font-size: 13px; font-weight: 400; line-height: 20px; }
  .avatar { width: 26px; height: 26px; border-radius: 50%; background: #7a86cc; color: #fff; font-size: 10.5px; line-height: 25px; text-align: center; }
  .upgrade { width: 152px; height: 29px; justify-self: end; border-radius: 15px; color: #fff; font-size: 15px; letter-spacing: -.3px; display: flex; align-items: center; justify-content: center; gap: 6px; background: linear-gradient(90deg, #45bcff, #2264ff 58%, #8a4dff); }
  .win .sep { width: 1px; height: 24px; background: #c9c9c9; }

  .menubar {
    height: 45px; flex: none; display: grid; align-items: center; padding-left: 25px;
    grid-template-columns: 62px 20px repeat(6, 32px) 18px 266px 88px 68px 120px 98px 79px 120px 99px 76px 264px 99px 57px 36px 32px 58px 32px;
  }
  .menubar .sep { width: 1px; height: 21px; background: #c8c8c8; justify-self: center; }
  .menu { display: flex; align-items: center; gap: 8px; letter-spacing: -.45px; }
  .menu span { padding-bottom: 1px; }
  .cell { display: flex; justify-content: center; }
  .dim { color: #b0b0b0; }
  .mtab { font-size: 16.6px; white-space: nowrap; }
  .mtab b { font-weight: 400; position: relative; line-height: 32px; }
  .mtab.sel b { font-weight: 600; color: #c9214c; }
  .mtab.sel b::after { content: ''; position: absolute; left: 2px; right: 0; bottom: 0; height: 2px; background: #c9214c; }
  .mtab.alert b::after { content: ''; position: absolute; right: -11px; top: 1px; width: 6px; height: 6px; border-radius: 50%; background: #ee6464; }
  .wpsai { display: flex; align-items: center; gap: 5px; color: #c063c8; }
  .wpsai span { letter-spacing: -.1px; background: linear-gradient(90deg, #d162a4, #a869e8); -webkit-background-clip: text; background-clip: text; color: transparent; white-space: nowrap; }
  .share { height: 30px; border: 1.5px solid #0d6efd; border-radius: 4px; background: #fff; color: #0d6efd; display: flex; align-items: center; justify-content: center; padding-bottom: 1px; }
  .gear { color: #777; }

  .ribbon {
    height: 94px; margin: 0 15px; flex: none; border: 1px solid #cfcfcf; border-radius: 10px; background: #fff; box-shadow: 0 1px 4px rgba(0, 0, 0, .18);
    padding-left: 179.4px; display: grid; align-items: start; position: relative; z-index: 1;
    grid-template-columns: 86px 78px 92px 15px 110px 115px 5px 100px 107px 82px 3px 71px 57px 100px 97px 15px 131px 95px 170px;
  }
  .rsep { width: 1px; height: 83px; margin-top: 5px; background: #cfcfcf; justify-self: center; }
  .tool { display: flex; flex-direction: column; align-items: center; padding-top: 16px; }
  .ticon { height: 34px; display: flex; align-items: center; }
  .tlabel { display: flex; align-items: center; gap: 4px; white-space: nowrap; line-height: 24px; letter-spacing: -.18px; }

  .body { flex: 1; min-height: 0; display: flex; position: relative; }
  .rail { width: 70px; border-right: 1px solid #cfcfcf; display: flex; flex-direction: column; align-items: center; gap: 10px; padding-top: 20px; flex: none; color: #3c3c3c; }
  .rail span { width: 40px; height: 40px; border-radius: 7px; display: flex; align-items: center; justify-content: center; }
  .rail .on { background: #d6d6d6; }
  .panel { width: 326px; flex: none; border-right: 1px solid #cfcfcf; position: relative; display: flex; flex-direction: column; }
  .phead { height: 36px; margin-top: 17px; padding: 0 23px 0 15px; display: flex; align-items: center; justify-content: space-between; font-size: 16px; }
  .zoomrow { height: 64px; padding: 0 20px 0 20px; display: flex; align-items: center; }
  .slider { width: 206px; height: 2px; background: #b8b8b8; margin: 0 20px 0 22px; position: relative; }
  .slider i { display: block; width: 28px; height: 2px; background: #2450e0; }
  .slider b { position: absolute; left: 20px; top: -8px; width: 17px; height: 17px; border-radius: 50%; background: #8c8c8c; border: 4px solid #fff; box-shadow: 0 0 0 1px #b5b5b5; }
  .list { height: 675px; margin-top: 3px; overflow: hidden; }
  .thumbs { display: flex; flex-direction: column; align-items: center; gap: 27px; width: 307px; }
  .card { width: 229px; border-radius: 7px; background: #e1e1e1; display: flex; flex-direction: column; align-items: center; flex: none; }
  .c3 { height: 224px; border-radius: 0 0 7px 7px; }
  .c4 { height: 337px; background: #d6d6d6; padding-top: 20px; }
  .c5 { height: 337px; padding-top: 20px; }
  .sheet { width: 199px; height: 256px; border-radius: 4px; background: #fff; overflow: hidden; position: relative; flex: none; box-shadow: 0 0 1px #bbb; }
  .c3 .sheet { height: 164px; border-radius: 0 0 4px 4px; }
  .sheet svg { display: block; width: 199px; }
  .cur::after { content: ''; position: absolute; inset: 0; border: 2px solid #c3254d; border-radius: 4px; }
  .corner { position: absolute; right: 0; bottom: 0; width: 9px; height: 9px; border-radius: 4px 0 4px 0; background: #c3254d; }
  .num { font-size: 15px; line-height: 20px; margin-top: 20px; color: #333; }
  .pscroll { position: absolute; right: 5px; top: 317px; width: 7px; height: 157px; border-radius: 4px; background: #d0d0d0; }

  .canvas { flex: 1; display: flex; justify-content: flex-end; overflow: hidden; }
  .page { width: 614px; height: 800px; margin-top: 17px; background: #fff; border: 1px solid #d2d2d2; flex: none; }
  .story { display: block; width: 100%; }
  .vscroll { width: 21px; margin-left: 408px; display: flex; flex-direction: column; align-items: center; flex: none; padding-top: 8px; }
  .up { border: 4px solid transparent; border-top: 0; border-bottom: 6px solid #777; }
  .bar { width: 10px; height: 92px; border-radius: 5px; background: #d0d0d0; margin-top: 297px; }
  .down { border: 4px solid transparent; border-bottom: 0; border-top: 6px solid #777; margin-top: 389px; }
  .tools { width: 71px; flex: none; border-left: 1px solid #cfcfcf; color: #3b4966; display: grid; justify-items: center; align-items: center; align-content: start; padding-top: 10px; grid-template-rows: 40px 42px 55px 45px 55px 35px 56px 45px 55px 45px; }
  .tools span:nth-child(n+8) { color: #3c3c3c; }
  .float { position: absolute; left: 1850px; top: 599px; width: 60px; height: 60px; border-radius: 13px; background: #acaeb4; border: 4px solid #cdced2; display: flex; align-items: center; justify-content: center; }

  .status {
    height: 31px; flex: none; border-top: 1px solid #cdcdcd; border-bottom: 1px solid #a9b6bd; padding-left: 23px; display: grid; align-items: center; color: #333;
    grid-template-columns: 113px 32px 49px 137px 50px 30px 50px 30px 410px 30px 50px 1px 50px 30px 68px 8px 33px 22px 16px 42px 16px 42px 25px 26px 417px 20px 60px 21px;
  }
  .status > span { display: flex; justify-content: center; align-items: center; height: 29px; padding-bottom: 1px; }
  .status .sep { width: 1px; height: 17px; background: #c6c6c6; justify-self: center; }
  .nav { display: flex; align-items: center; gap: 6px; }
  .pageno { height: 25px; border: 1px solid #b5b5b5; border-radius: 4px; background: #fff; text-align: center; line-height: 21px; }
  .status > .picked { background: #d6d6d6; border-radius: 5px; }
  .status > .pct { justify-content: flex-end; padding-right: 17px; letter-spacing: -.4px; }
  .status > .r { justify-content: flex-end; padding-right: 2px; }
  .status > .dim { color: #b0b0b0; }

  .taskbar { height: 59px; flex: none; background: #cde6ec; display: flex; align-items: center; padding: 0 0 2px 25px; color: #1c1c1c; }
  .weather { width: 476px; display: flex; align-items: center; gap: 10px; margin-top: -1px; }
  .uv { width: 30px; height: 30px; border-radius: 50%; background: linear-gradient(150deg, #f2c02d, #f38a1b 50%, #f0620c); color: #fff; font-size: 10.5px; font-weight: 600; text-align: center; line-height: 30px; }
  .wtext { display: flex; flex-direction: column; line-height: 20px; letter-spacing: -.1px; }
  .soft { color: #54646a; }
  .search { width: 273px; height: 39px; border-radius: 20px; background: #f0f7fa; box-shadow: 0 1px 1px #a8bcc3; margin-left: 18px; padding-left: 14px; display: flex; align-items: center; gap: 13px; font-size: 16px; color: #555d61; }
  .search .ic { color: #222; }
  .apps { display: flex; margin-left: 3px; }
  .appbtn { width: 55px; height: 49px; display: flex; align-items: center; justify-content: center; position: relative; }
  .appbtn.focus { width: 49px; margin: 0 3px; border-radius: 6px; background: #e6f3f7; box-shadow: 0 0 1px #9ab; }
  .appbtn.focus .ic { margin: -3px 0 0 4px; }
  .running::after, .focus::after { content: ''; position: absolute; bottom: 0; left: 50%; width: 8px; height: 4px; margin-left: -4px; border-radius: 2px; background: #738487; }
  .focus::after { width: 20px; margin-left: -10px; background: #23828f; }
  .tray { margin-left: 116px; display: grid; align-items: center; grid-template-columns: 34px 39px 64px 30px 30px 30px 93px 29px; }
  .tray > span { display: flex; justify-content: center; }
  .tray > .cl { padding-left: 6px; }
  .tray > .two { display: block; line-height: 20px; text-align: center; font-size: 14.5px; margin-top: -1px; }
  .tray > .mid { padding-right: 1px; }
  .tray > .clock { text-align: right; letter-spacing: .2px; }
  .badge { width: 20px; height: 20px; margin-left: 9px; border-radius: 50%; background: #23828f; color: #fff; text-align: center; line-height: 20px; font-size: 11.5px; }

  .story text { fill: #4d4d4d; font-size: 6.8px; }
  .story .s-title { font-size: 13.4px; fill: #333; }
  .story .s-cap { font-size: 6.6px; }
  .story .s-cap.on { font-weight: 700; fill: #000; }
  .story .s-bold { font-weight: 600; fill: #222; }
  .story .s-mark { fill: #111; font-size: 7px; font-weight: 500; }
  .story .s-week { font-size: 6.4px; fill: #444; }
  .thumbs .story text { stroke: #333; stroke-width: .9px; }
  .thumbs .story .s-cap.on { stroke: #000; stroke-width: 1.3px; }
</style>
